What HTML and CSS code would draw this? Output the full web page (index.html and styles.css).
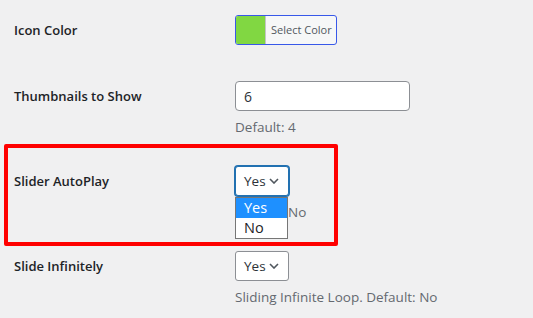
FILE: index.html
```html
<!DOCTYPE html>
<html lang="en">
<head>
    <meta charset="UTF-8">
    <meta name="viewport" content="width=device-width, initial-scale=1.0">
    <title>Slider Settings</title>
    <link rel="stylesheet" href="styles.css">
</head>
<body>
    <div class="settings">
        <!-- Icon color -->
        <div class="row row-first">
            <div class="label">Icon Color</div>
            <div class="field">
                <button class="color-btn" type="button">
                    <span class="swatch"></span>
                    <span class="color-text">Select Color</span>
                </button>
            </div>
        </div>

        <!-- Thumbnails -->
        <div class="row">
            <div class="label">Thumbnails to Show</div>
            <div class="field">
                <input class="text-input" type="text" value="6">
                <p class="desc">Default: 4</p>
            </div>
        </div>

        <!-- Autoplay, open dropdown -->
        <div class="row">
            <div class="label">Slider AutoPlay</div>
            <div class="field">
                <div class="select-wrap">
                    <div class="select is-focused">
                        <span>Yes</span>
                        <svg class="chevron" width="10" height="6" viewBox="0 0 10 6"><path d="M1 1 L5 5 L9 1" fill="none" stroke="#50575e" stroke-width="1.6"/></svg>
                    </div>
                    <ul class="dropdown">
                        <li class="active">Yes</li>
                        <li>No</li>
                    </ul>
                </div>
                <p class="desc">Default: No</p>
            </div>
            <div class="highlight-box"></div>
        </div>

        <!-- Infinite -->
        <div class="row">
            <div class="label">Slide Infinitely</div>
            <div class="field">
                <div class="select-wrap">
                    <div class="select">
                        <span>Yes</span>
                        <svg class="chevron" width="10" height="6" viewBox="0 0 10 6"><path d="M1 1 L5 5 L9 1" fill="none" stroke="#50575e" stroke-width="1.6"/></svg>
                    </div>
                </div>
                <p class="desc">Sliding Infinite Loop. Default: No</p>
            </div>
        </div>
    </div>
</body>
</html>
```

FILE: styles.css
```css
body {
    margin: 0;
    background: #f0f0f1;
    font-family: 'Open Sans', 'Noto Sans', sans-serif;
    font-size: 14px;
    color: #1d2327;
}
.row {
    display: grid;
    grid-template-columns: 221px 1fr;
    padding: 15px 0 14px 14px;
    position: relative;
}
.row-first {
    padding-bottom: 21px;
}
.label {
    font-size: 13px;
    font-weight: 600;
    line-height: 30px;
}
.desc {
    margin: 6px 0 0;
    font-size: 13.5px;
    line-height: 20px;
    color: #646970;
}
.color-btn {
    display: flex;
    width: 102px;
    height: 30px;
    padding: 0;
    border: 1px solid #3858e9;
    border-radius: 3px;
    background: #f6f7f7;
    overflow: hidden;
    box-sizing: border-box;
    font-family: inherit;
    cursor: pointer;
}
.swatch {
    flex: none;
    width: 29px;
    height: 100%;
    background: #81d742;
    border-right: 1px solid #c3c4c7;
}
.color-text {
    white-space: nowrap;
    font-size: 11px;
    line-height: 28px;
    padding: 0 5px;
    color: #50575e;
}
.text-input {
    display: block;
    width: 175px;
    height: 30px;
    padding: 0 8px;
    border: 1px solid #8c8f94;
    border-radius: 4px;
    background: #fff;
    box-sizing: border-box;
    font-family: inherit;
    font-size: 14px;
    color: #2c3338;
}
.select-wrap {
    position: relative;
    display: inline-block;
    vertical-align: top;
}
.select {
    display: flex;
    align-items: center;
    justify-content: space-between;
    width: 54px;
    height: 30px;
    padding: 0 9px 0 8px;
    border: 1px solid #8c8f94;
    border-radius: 3px;
    background: #fff;
    box-sizing: border-box;
    font-size: 13.5px;
    color: #2c3338;
}
.select.is-focused {
    border-color: #2271b1;
    box-shadow: 0 0 0 1px #2271b1;
}
.dropdown {
    position: absolute;
    top: calc(100% + 1px);
    left: 0;
    width: 53px;
    margin: 0;
    padding: 0;
    list-style: none;
    background: #fff;
    border: 1px solid #767676;
    box-sizing: border-box;
    z-index: 2;
}
.dropdown li {
    height: 20px;
    line-height: 20px;
    padding-left: 8px;
    font-size: 14.5px;
    color: #1d2327;
}
.dropdown li.active {
    background: #1e90ff;
    color: #fff;
}
.highlight-box {
    position: absolute;
    top: -7px;
    left: 4px;
    width: 334px;
    height: 102px;
    border: 4px solid #ff0000;
    border-radius: 2px;
    box-sizing: border-box;
    pointer-events: none;
}
```
